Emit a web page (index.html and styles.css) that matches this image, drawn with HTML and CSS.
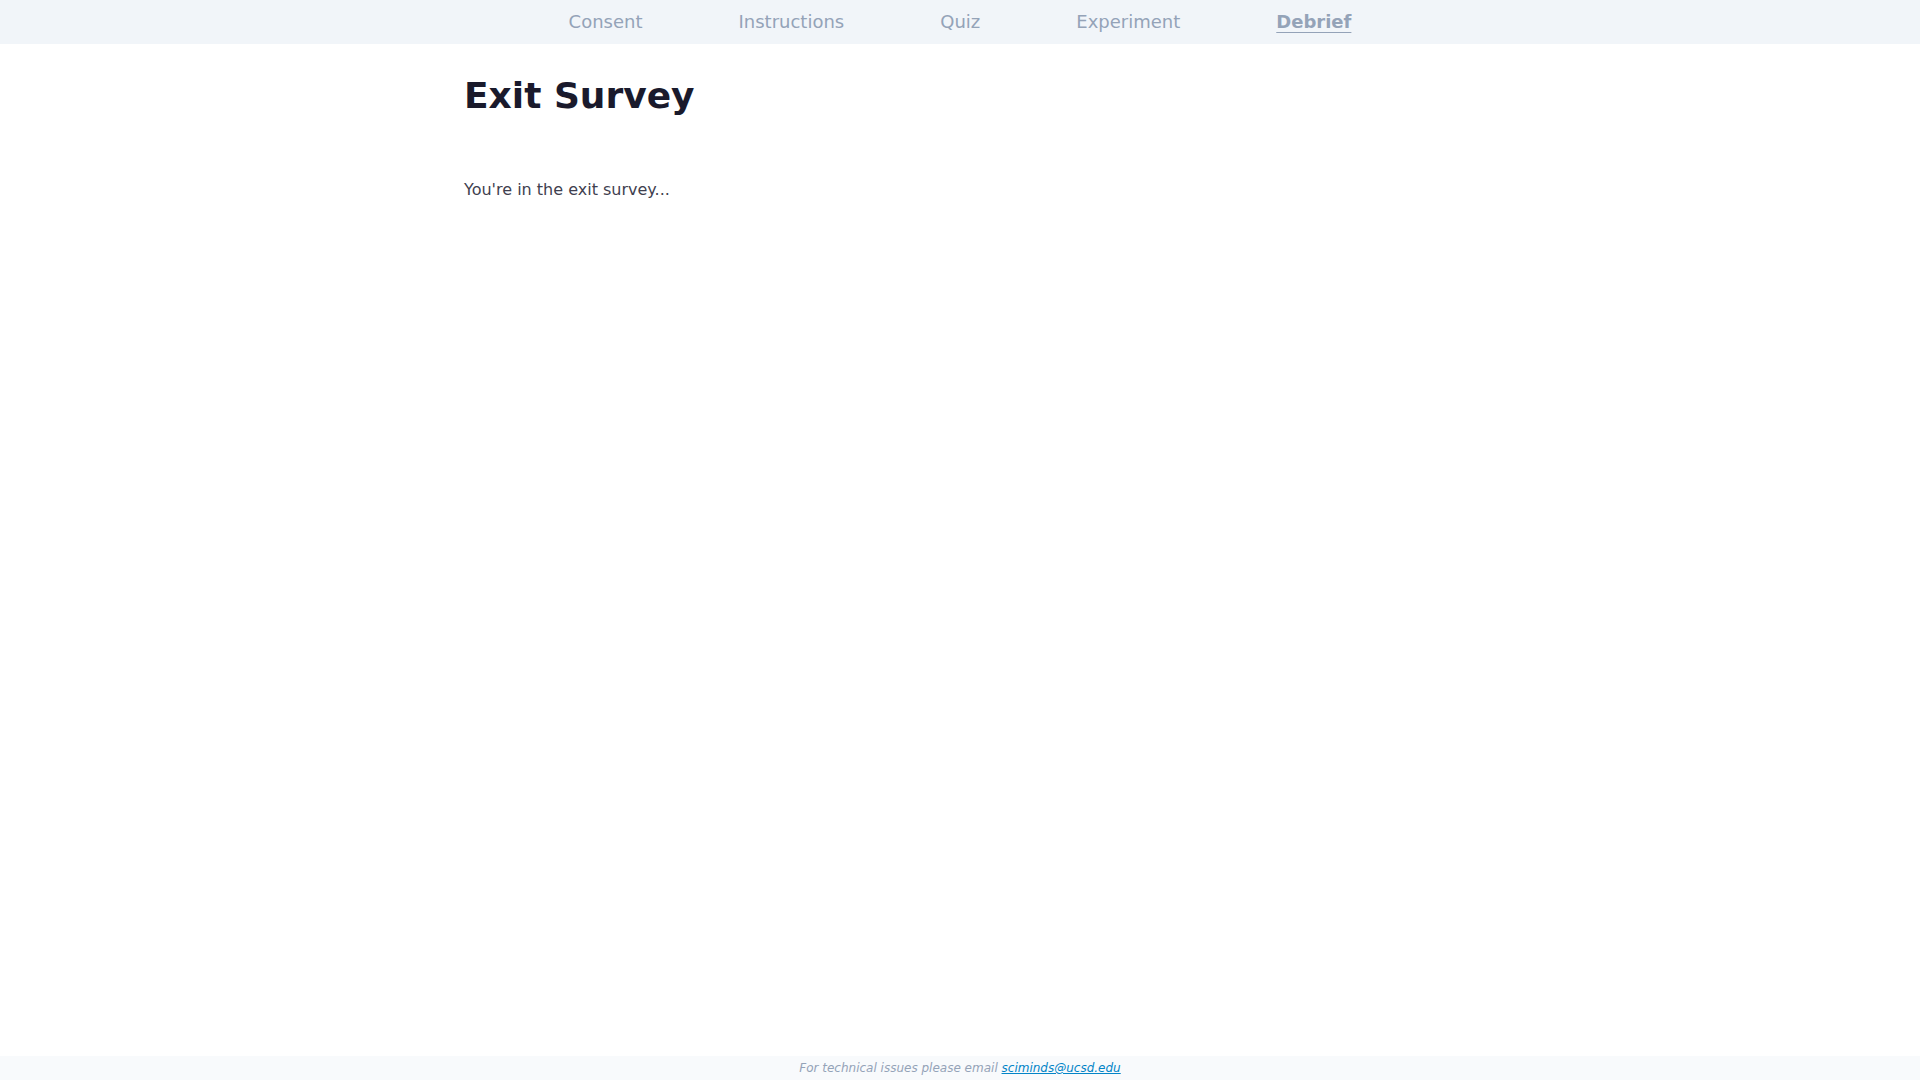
FILE: index.html
```html
<!DOCTYPE html>
<html lang="en">
<head>
<meta charset="utf-8">
<title>Exit Survey</title>
<link rel="stylesheet" href="styles.css">
</head>
<body>
<div class="page">
  <nav class="nav">
    <span class="nav-item">Consent</span>
    <span class="nav-item">Instructions</span>
    <span class="nav-item">Quiz</span>
    <span class="nav-item">Experiment</span>
    <span class="nav-item active">Debrief</span>
  </nav>
  <main class="content">
    <h1 class="title">Exit Survey</h1>
    <p class="text">You're in the exit survey...</p>
  </main>
  <footer class="footer">
    <span class="footer-text">For technical issues please email <a class="footer-link" href="#">sciminds@ucsd.edu</a></span>
  </footer>
</div>
</body>
</html>
```

FILE: styles.css
```css
html, body {
  margin: 0;
  padding: 0;
  height: 100%;
}
body {
  font-family: "DejaVu Sans", sans-serif;
  background: #ffffff;
}
.page {
  display: flex;
  flex-direction: column;
  min-height: 100vh;
}
.nav {
  height: 44px;
  background: #f1f5f9;
  display: flex;
  justify-content: center;
  align-items: center;
  gap: 96px;
}
.nav-item {
  font-size: 18px;
  color: #94a3b8;
  line-height: 1;
}
.nav-item.active {
  font-weight: bold;
  text-decoration: underline;
  text-underline-offset: 4px;
}
.content {
  flex: 1;
  width: 992px;
  margin: 0 auto;
  padding: 0 16px;
}
.title {
  margin: 28px 0 0 0;
  font-size: 36px;
  line-height: 48px;
  font-weight: bold;
  color: #1a1a2c;
}
.text {
  margin: 58px 0 0 0;
  font-size: 16px;
  line-height: 24px;
  color: #3f3f4f;
}
.footer {
  height: 24px;
  background: #f8fafc;
  display: flex;
  justify-content: center;
  align-items: center;
}
.footer-text {
  font-family: "DejaVu Sans", sans-serif;
  font-style: italic;
  font-size: 12px;
  color: #94a3b8;
}
.footer-link {
  color: #0284c7;
  text-decoration: underline;
}
```
